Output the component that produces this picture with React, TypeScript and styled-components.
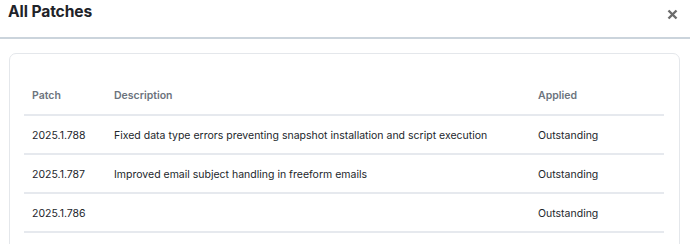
import React from "react";
import styled, { createGlobalStyle } from "styled-components";

const Global = createGlobalStyle`
  html, body { margin: 0; padding: 0; background: #ffffff; }
  body { font-family: Inter, "Noto Sans", sans-serif; color: #1f2329; }
`;

const Modal = styled.div`
  width: 690px;
  height: 244px;
  overflow: hidden;
  background: #fff;
`;

const Header = styled.div`
  display: flex;
  align-items: flex-start;
  justify-content: space-between;
  height: 39px;
  padding: 2px 12px 0 8px;
  box-sizing: border-box;
  border-bottom: 2px solid #cbd4dc;
`;

const Title = styled.h2`
  margin: 0;
  font-size: 15.6px;
  line-height: 20px;
  font-weight: 700;
  letter-spacing: -0.1px;
  color: #1f2329;
`;

const Close = styled.button`
  border: 0;
  background: none;
  padding: 0;
  margin-top: 7px;
  width: 11px;
  height: 11px;
  display: flex;
  align-items: center;
  justify-content: center;
  color: #6b6b6b;
  cursor: pointer;
`;

const Body = styled.div`
  padding: 14px 10px 0 9px;
`;

const Card = styled.div`
  border: 1px solid #e4e7eb;
  border-radius: 7px;
  padding: 22px 15px 20px 14px;
  height: 240px;
  box-sizing: border-box;
`;

const Table = styled.table`
  width: 100%;
  border-collapse: collapse;
  table-layout: fixed;
  font-size: 10.5px;
`;

const Th = styled.th<{ $w?: number }>`
  text-align: left;
  font-weight: 600;
  color: #6c737d;
  padding: 1px 8px 0;
  height: 39px;
  width: ${(p) => (p.$w ? `${p.$w}px` : "auto")};
  border-bottom: 2px solid #e6e9ee;
  box-sizing: border-box;
`;

const Td = styled.td`
  padding: 2px 8px 0;
  height: 39px;
  box-sizing: border-box;
  color: #22262b;
  border-bottom: 2px solid #e6e9ee;
  white-space: nowrap;
`;

const rows = [
  { patch: "2025.1.788", desc: "Fixed data type errors preventing snapshot installation and script execution", applied: "Outstanding" },
  { patch: "2025.1.787", desc: "Improved email subject handling in freeform emails", applied: "Outstanding" },
  { patch: "2025.1.786", desc: "", applied: "Outstanding" },
];

export default function App() {
  return (
    <Modal>
      <Global />
      <Header>
        <Title>All Patches</Title>
        <Close aria-label="Close">
          <svg width="11" height="11" viewBox="0 0 11 11">
            <path d="M1.5 1.5 L9.5 9.5 M9.5 1.5 L1.5 9.5" stroke="currentColor" strokeWidth="2.4" strokeLinecap="butt" />
          </svg>
        </Close>
      </Header>
      <Body>
        <Card>
          <Table>
            <thead>
              <tr>
                <Th $w={82}>Patch</Th>
                <Th>Description</Th>
                <Th $w={134}>Applied</Th>
              </tr>
            </thead>
            <tbody>
              {rows.map((r) => (
                <tr key={r.patch}>
                  <Td>{r.patch}</Td>
                  <Td>{r.desc}</Td>
                  <Td>{r.applied}</Td>
                </tr>
              ))}
            </tbody>
          </Table>
        </Card>
      </Body>
    </Modal>
  );
}
